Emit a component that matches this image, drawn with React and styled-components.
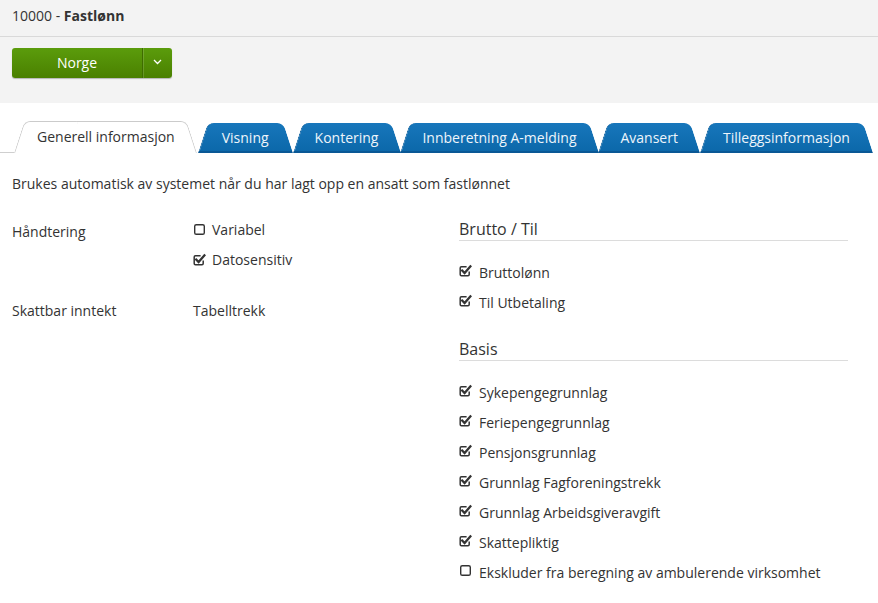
import React from "react";
import styled, { createGlobalStyle } from "styled-components";

const GlobalStyle = createGlobalStyle`
  html, body {
    margin: 0;
    padding: 0;
    background: #fff;
  }
  body {
    font-family: "Open Sans", "DejaVu Sans", sans-serif;
    font-size: 14px;
    color: #333;
  }
`;

const Page = styled.div`
  width: 878px;
`;

const TopArea = styled.div`
  background: #f3f3f3;
`;

const TitleBar = styled.div`
  height: 37px;
  box-sizing: border-box;
  padding: 6px 12px 0;
  line-height: 20px;
  border-bottom: 1px solid #d9d9d9;
  b {
    font-weight: 700;
  }
`;

const ActionBar = styled.div`
  padding: 11px 12px 25px;
`;

const SplitButton = styled.div`
  display: flex;
  width: 160px;
  height: 30px;
  border-radius: 3px;
  overflow: hidden;
  box-shadow: 0 1px 1px rgba(0, 0, 0, 0.25);
`;

const GreenButton = styled.button`
  border: none;
  margin: 0;
  padding: 0 0 2px;
  height: 30px;
  width: ${(p) => p.$width}px;
  background: linear-gradient(#5b9c0c, #4a8000);
  color: #fff;
  font-family: "Open Sans", sans-serif;
  font-size: 14px;
  display: flex;
  align-items: center;
  justify-content: center;
  border-left: ${(p) => (p.$caret ? "1px solid #3f6d00" : "none")};
  box-shadow: ${(p) => (p.$caret ? "inset 1px 0 0 rgba(255,255,255,0.15)" : "none")};
`;

const TabRow = styled.div`
  display: flex;
  align-items: flex-end;
  margin-top: 18px;
`;

const TabSpacer = styled.div`
  width: 14px;
  border-bottom: 1px solid #cfcfcf;
`;

const Tab = styled.div`
  position: relative;
  z-index: ${(p) => (p.$active ? 2 : 1)};
  height: ${(p) => (p.$active ? 32 : 30)}px;
  line-height: ${(p) => (p.$active ? 32 : 30)}px;
  padding: 0 ${(p) => p.$pad}px;
  color: ${(p) => (p.$active ? "#333" : "#eef5fb")};
  white-space: nowrap;
  box-sizing: border-box;

  &::before,
  &::after {
    content: "";
    position: absolute;
    top: 0;
    bottom: 0;
    z-index: -1;
    transform-origin: bottom;
    box-sizing: border-box;
    background: ${(p) =>
      p.$active ? "#fff" : "linear-gradient(#1776bb, #0c68aa)"};
    border-top: ${(p) => (p.$active ? "1px solid #cbcbcb" : "none")};
    border-bottom: ${(p) => (p.$active ? "none" : "2px solid #0a5895")};
  }
  &::before {
    left: 0;
    right: 40%;
    transform: skewX(-18deg);
    border-top-left-radius: 6px;
    border-left: ${(p) => (p.$active ? "1px solid #cbcbcb" : "1px solid #0b5f9e")};
  }
  &::after {
    left: 40%;
    right: 0;
    transform: skewX(18deg);
    border-top-right-radius: 6px;
    border-right: ${(p) => (p.$active ? "1px solid #cbcbcb" : "none")};
  }
`;

const Content = styled.div`
  padding: 0 12px;
`;

const Description = styled.div`
  margin-top: 21px;
  line-height: 20px;
`;

const Columns = styled.div`
  display: flex;
  margin-top: 20px;
`;

const LeftCol = styled.div`
  width: 447px;
`;

const RightCol = styled.div`
  width: 389px;
`;

const FormRow = styled.div`
  display: grid;
  grid-template-columns: 181px 1fr;
  margin-top: ${(p) => p.$gap || 0}px;
`;

const Label = styled.div`
  line-height: 30px;
  padding-top: 3px;
`;

const Value = styled.div`
  line-height: 30px;
  padding-top: ${(p) => p.$offset || 0}px;
`;

const CheckItem = styled.div`
  display: flex;
  align-items: center;
  height: 30px;
  gap: ${(p) => (p.$raised ? 7 : 6)}px;
  svg {
    flex: none;
    position: relative;
    top: ${(p) => (p.$raised ? -2 : 0)}px;
  }
`;

const GroupTitle = styled.div`
  font-size: 16px;
  line-height: 22px;
  border-bottom: 1px solid #dcdcdc;
  margin-top: ${(p) => p.$gap || 4}px;
`;

const CheckList = styled.div`
  margin-top: 16px;
`;

function CheckIcon({ checked }) {
  return (
    <svg width="13" height="13" viewBox="0 0 13 13">
      {checked ? (
        <>
          <path
            d="M10.2 7.4 V10.6 Q10.2 11.8 9 11.8 H2.4 Q1.2 11.8 1.2 10.6 V4 Q1.2 2.8 2.4 2.8 H7.6"
            fill="none"
            stroke="#333"
            strokeWidth="1.5"
          />
          <path
            d="M3.2 6.6 L5.6 9 L11.4 2.4"
            fill="none"
            stroke="#333"
            strokeWidth="2.3"
            strokeLinecap="square"
          />
        </>
      ) : (
        <rect
          x="1.7"
          y="1.7"
          width="9.6"
          height="9.6"
          rx="1.6"
          fill="none"
          stroke="#333"
          strokeWidth="1.4"
        />
      )}
    </svg>
  );
}

function Chevron() {
  return (
    <svg width="9" height="6" viewBox="0 0 9 6">
      <path d="M1 1 L4.5 4.5 L8 1" fill="none" stroke="#fff" strokeWidth="1.3" />
    </svg>
  );
}

const tabs = [
  { label: "Generell informasjon", active: true, pad: 23 },
  { label: "Visning", pad: 24 },
  { label: "Kontering", pad: 22 },
  { label: "Innberetning A-melding", pad: 22 },
  { label: "Avansert", pad: 22 },
  { label: "Tilleggsinformasjon", pad: 23 },
];

const bruttoItems = ["Bruttolønn", "Til Utbetaling"];

const basisItems = [
  { label: "Sykepengegrunnlag", checked: true },
  { label: "Feriepengegrunnlag", checked: true },
  { label: "Pensjonsgrunnlag", checked: true },
  { label: "Grunnlag Fagforeningstrekk", checked: true },
  { label: "Grunnlag Arbeidsgiveravgift", checked: true },
  { label: "Skattepliktig", checked: true },
  { label: "Ekskluder fra beregning av ambulerende virksomhet", checked: false },
];

export default function App() {
  return (
    <>
      <GlobalStyle />
      <Page>
        <TopArea>
          <TitleBar>
            10000 - <b>Fastlønn</b>
          </TitleBar>
          <ActionBar>
            <SplitButton>
              <GreenButton $width={130}>Norge</GreenButton>
              <GreenButton $width={30} $caret>
                <Chevron />
              </GreenButton>
            </SplitButton>
          </ActionBar>
        </TopArea>

        <TabRow>
          <TabSpacer />
          {tabs.map((t) => (
            <Tab key={t.label} $active={t.active} $pad={t.pad}>
              {t.label}
            </Tab>
          ))}
        </TabRow>

        <Content>
          <Description>
            Brukes automatisk av systemet når du har lagt opp en ansatt som fastlønnet
          </Description>

          <Columns>
            <LeftCol>
              <FormRow>
                <Label>Håndtering</Label>
                <div>
                  <CheckItem>
                    <CheckIcon checked={false} />
                    Variabel
                  </CheckItem>
                  <CheckItem>
                    <CheckIcon checked />
                    Datosensitiv
                  </CheckItem>
                </div>
              </FormRow>
              <FormRow $gap={19}>
                <Label>Skattbar inntekt</Label>
                <Value $offset={3}>Tabelltrekk</Value>
              </FormRow>
            </LeftCol>

            <RightCol>
              <GroupTitle>Brutto / Til</GroupTitle>
              <CheckList>
                {bruttoItems.map((label) => (
                  <CheckItem key={label} $raised>
                    <CheckIcon checked />
                    {label}
                  </CheckItem>
                ))}
              </CheckList>
              <GroupTitle $gap={21}>Basis</GroupTitle>
              <CheckList>
                {basisItems.map((item) => (
                  <CheckItem key={item.label} $raised>
                    <CheckIcon checked={item.checked} />
                    {item.label}
                  </CheckItem>
                ))}
              </CheckList>
            </RightCol>
          </Columns>
        </Content>
      </Page>
    </>
  );
}
